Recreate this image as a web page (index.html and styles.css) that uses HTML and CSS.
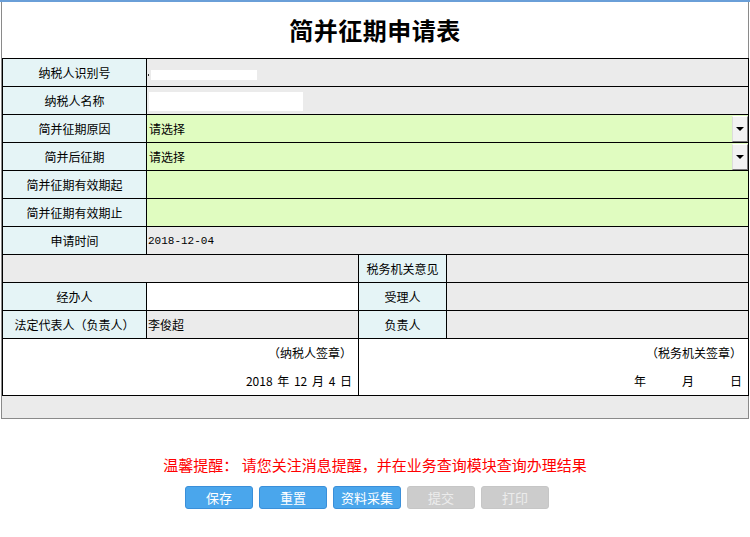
FILE: index.html
```html
<!DOCTYPE html>
<html lang="zh">
<head>
<meta charset="utf-8">
<title>简并征期申请表</title>
<link rel="stylesheet" href="styles.css">
</head>
<body>
<div class="topbar"></div>
<div class="frame">
  <h1 class="title">简并征期申请表</h1>
  <table class="form">
    <colgroup>
      <col class="c1"><col class="c2"><col class="c3"><col class="c4">
    </colgroup>
    <tr>
      <td class="lbl">纳税人识别号</td>
      <td class="val gray" colspan="3"><span class="dot"></span><span class="mask m1"></span></td>
    </tr>
    <tr>
      <td class="lbl">纳税人名称</td>
      <td class="val gray" colspan="3"><span class="mask m2"></span></td>
    </tr>
    <tr>
      <td class="lbl">简并征期原因</td>
      <td class="val green sel" colspan="3"><div class="select"><span class="stext">请选择</span><span class="arrow"></span></div></td>
    </tr>
    <tr>
      <td class="lbl">简并后征期</td>
      <td class="val green sel" colspan="3"><div class="select"><span class="stext">请选择</span><span class="arrow"></span></div></td>
    </tr>
    <tr>
      <td class="lbl">简并征期有效期起</td>
      <td class="val green" colspan="3"></td>
    </tr>
    <tr>
      <td class="lbl">简并征期有效期止</td>
      <td class="val green" colspan="3"></td>
    </tr>
    <tr>
      <td class="lbl">申请时间</td>
      <td class="val gray date" colspan="3">2018-12-04</td>
    </tr>
    <tr>
      <td class="gray" colspan="2"></td>
      <td class="lbl">税务机关意见</td>
      <td class="gray"></td>
    </tr>
    <tr>
      <td class="lbl">经办人</td>
      <td class="white"></td>
      <td class="lbl">受理人</td>
      <td class="gray"></td>
    </tr>
    <tr>
      <td class="lbl">法定代表人（负责人）</td>
      <td class="val gray">李俊超</td>
      <td class="lbl">负责人</td>
      <td class="gray"></td>
    </tr>
    <tr class="sign">
      <td colspan="2" class="signcell">
        <div class="sline">（纳税人签章）</div>
        <div class="sline spaced">2018 年 12 月 4 日</div>
      </td>
      <td colspan="2" class="signcell">
        <div class="sline">（税务机关签章）</div>
        <div class="sline ymd"><span>年</span><span>月</span><span>日</span></div>
      </td>
    </tr>
  </table>
  <div class="footer"></div>
</div>
<p class="notice">温馨提醒： 请您关注消息提醒，并在业务查询模块查询办理结果</p>
<div class="buttons">
  <button class="btn">保存</button>
  <button class="btn">重置</button>
  <button class="btn">资料采集</button>
  <button class="btn off">提交</button>
  <button class="btn off">打印</button>
</div>
</body>
</html>
```
FILE: styles.css
```css
html, body {
  margin: 0;
  padding: 0;
  background: #ffffff;
  font-family: "Noto Sans CJK SC", "Noto Sans", sans-serif;
  font-size: 12px;
  color: #000;
}

.topbar {
  height: 2px;
  background: #6a9fd8;
}

.frame {
  margin-left: 1px;
  width: 746px;
  border: 1px solid #8a8a8a;
  border-top: none;
}

.title {
  margin: 0;
  height: 56px;
  line-height: 56px;
  text-align: center;
  font-size: 24px;
  font-weight: bold;
  letter-spacing: 0.5px;
}

.form {
  width: 746px;
  border-collapse: collapse;
  table-layout: fixed;
}

.c1 { width: 144px; }
.c2 { width: 212px; }
.c3 { width: 88px; }
.c4 { width: 302px; }

.form td {
  border: 1px solid #000;
  height: 27px;
  padding: 0;
  vertical-align: middle;
}

.lbl {
  background: #e5f4f6;
  text-align: center;
}

.gray { background: #ebebeb; }
.green { background: #e0fcc0; }
.white { background: #ffffff; }

.val {
  padding-left: 1px !important;
}

.date {
  font-family: "Liberation Mono", "DejaVu Sans Mono", monospace;
  font-size: 11px;
}

.dot {
  display: inline-block;
  width: 1px;
  height: 2px;
  background: #333;
  vertical-align: middle;
  margin-right: 2px;
}

.mask {
  display: inline-block;
  background: #ffffff;
  vertical-align: middle;
}

.m1 { width: 106px; height: 10px; }
.m2 { width: 154px; height: 19px; margin-left: 1px; }

.sel { padding: 0 !important; }

.select {
  display: flex;
  align-items: center;
  height: 27px;
}

.stext {
  flex: 1;
  padding-left: 2px;
}

.arrow {
  width: 14px;
  height: 24px;
  background: #f2f2f2;
  border-left: 1px solid #dcdcdc;
  border-top: 1px solid #fff;
  border-right: 1px solid #7a7a7a;
  border-bottom: 1px solid #7a7a7a;
  display: flex;
  align-items: center;
  justify-content: center;
}

.arrow::after {
  content: "";
  border-left: 4px solid transparent;
  border-right: 4px solid transparent;
  border-top: 4px solid #000;
}

.form tr.sign td {
  height: 55px;
  background: #fff;
  text-align: right;
  padding-right: 6px;
}

.sline {
  height: 28px;
  line-height: 28px;
}

.spaced {
  word-spacing: 2px;
}

.ymd {
  display: flex;
  justify-content: flex-end;
  gap: 36px;
}

.footer {
  height: 22px;
  background: #ebebeb;
}

.notice {
  margin: 37px 0 0;
  text-align: center;
  color: #ff0000;
  font-size: 15px;
  line-height: 18px;
}

.buttons {
  display: flex;
  justify-content: center;
  gap: 6px;
  margin-top: 12px;
  padding-right: 16px;
}

.btn {
  width: 68px;
  height: 23px;
  padding: 0;
  border: 1px solid #3a8fd9;
  border-radius: 3px;
  background: #4aa6ec;
  color: #fff;
  font-family: "Noto Sans CJK SC", sans-serif;
  font-size: 13px;
}

.btn.off {
  background: #cccccc;
  border-color: #c6c6c6;
  color: #ececec;
}
```
